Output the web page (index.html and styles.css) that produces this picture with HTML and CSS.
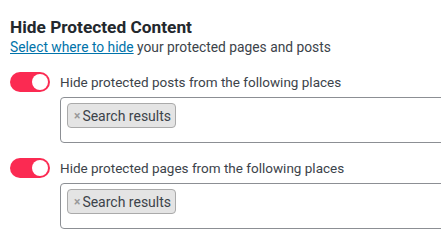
FILE: index.html
```html
<!DOCTYPE html>
<html>
<head>
<meta charset="utf-8">
<link rel="stylesheet" href="styles.css">
</head>
<body>
<div class="panel">
  <h2 class="title">Hide Protected Content</h2>
  <p class="desc"><a href="#" class="link">Select where to hide</a> your protected pages and posts</p>

  <div class="option">
    <div class="row">
      <span class="toggle"><span class="knob"></span></span>
      <span class="label">Hide protected posts from the following places</span>
    </div>
    <div class="select">
      <span class="chip"><span class="chip-x">×</span>Search results</span>
    </div>
  </div>

  <div class="option">
    <div class="row">
      <span class="toggle"><span class="knob"></span></span>
      <span class="label">Hide protected pages from the following places</span>
    </div>
    <div class="select">
      <span class="chip"><span class="chip-x">×</span>Search results</span>
    </div>
  </div>
</div>
</body>
</html>
```

FILE: styles.css
```css
html, body {
  margin: 0;
  padding: 0;
  background: #fff;
  overflow: hidden;
}
body {
  font-family: Roboto, "Noto Sans", "Liberation Sans", sans-serif;
  color: #3c434a;
  font-size: 13px;
}
.panel {
  padding: 16px 0 0 10px;
  width: 460px;
}
.title {
  margin: 0;
  font-size: 17.3px;
  font-weight: 700;
  line-height: 22px;
  color: #23282d;
}
.desc {
  margin: 0;
  font-size: 13.8px;
  line-height: 18px;
  color: #3c434a;
}
.link {
  color: #0073aa;
  text-decoration: underline;
}
.option {
  margin-top: 16px;
}
.option + .option {
  margin-top: 15px;
}
.row {
  display: flex;
  align-items: center;
  gap: 10px;
  height: 20px;
}
.toggle {
  width: 40px;
  height: 20px;
  border-radius: 10px;
  background: #fb2a52;
  display: flex;
  align-items: center;
  justify-content: flex-end;
  padding: 0 2px;
  box-sizing: border-box;
}
.knob {
  width: 16px;
  height: 16px;
  border-radius: 50%;
  background: #fff;
}
.label {
  font-size: 13.5px;
  color: #3c434a;
}
.select {
  margin: 5px 0 0 50px;
  height: 46px;
  box-sizing: border-box;
  border: 1px solid #8c8f94;
  border-radius: 4px;
  padding: 5px 6px;
  width: 420px;
}
.chip {
  display: inline-flex;
  align-items: center;
  height: 25px;
  box-sizing: border-box;
  padding: 0 4px 0 6px;
  background: #e4e4e4;
  border: 1px solid #aaa;
  border-radius: 4px;
  font-size: 14px;
  color: #3c434a;
}
.chip-x {
  color: #999;
  font-weight: 700;
  font-size: 12px;
  margin-right: 2px;
}
```
